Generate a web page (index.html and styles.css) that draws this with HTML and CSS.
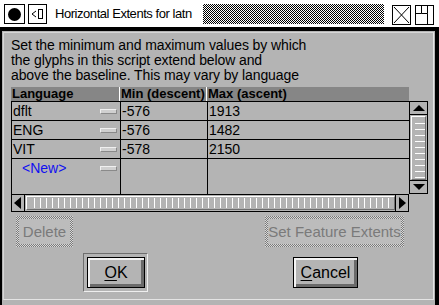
FILE: index.html
```html
<!DOCTYPE html>
<html>
<head>
<meta charset="utf-8">
<link rel="stylesheet" href="styles.css">
</head>
<body>
<div class="win">
  <div class="titlebar">
    <div class="tbox close"><span class="dot"></span></div>
    <div class="tbox menu"><svg width="14" height="14" viewBox="0 0 14 14"><path d="M5 4 L1 7 L5 10" fill="none" stroke="#000" stroke-width="1"/><rect x="7.5" y="2.5" width="4" height="9" fill="none" stroke="#000"/></svg></div>
    <div class="title">Horizontal Extents for latn</div>
    <div class="stipple"></div>
    <div class="tbox xbox"><svg width="17" height="18" viewBox="0 0 17 18"><path d="M1 1 L16 17 M16 1 L1 17" stroke="#000" stroke-width="1"/></svg></div>
    <div class="tbox maxbox"><svg width="17" height="18" viewBox="0 0 17 18"><path d="M5.5 0 V7.5 H0 M5.5 7.5 H11.5 M11.5 0 V7.5 M11.5 7.5 V18" fill="none" stroke="#000"/></svg></div>
  </div>
  <div class="frame">
    <div class="panel">
      <p class="intro">Set the minimum and maximum values by which<br>the glyphs in this script extend below and<br>above the baseline. This may vary by language</p>
      <div class="tablewrap">
        <div class="grid">
          <div class="head">
            <div class="hc c1">Language</div>
            <div class="hc c2">Min (descent)</div>
            <div class="hc c3">Max (ascent)</div>
          </div>
          <div class="body">
            <div class="rows">
              <div class="row"><div class="cell c1">dflt<span class="drop"></span></div><div class="cell c2">-576</div><div class="cell c3">1913</div></div>
              <div class="row"><div class="cell c1">ENG<span class="drop"></span></div><div class="cell c2">-576</div><div class="cell c3">1482</div></div>
              <div class="row"><div class="cell c1">VIT<span class="drop"></span></div><div class="cell c2">-578</div><div class="cell c3">2150</div></div>
              <div class="row last"><div class="cell c1"><span class="new">&lt;New&gt;</span><span class="drop"></span></div><div class="cell c2"></div><div class="cell c3"></div></div>
            </div>
            <div class="vscroll">
              <div class="arr up"></div>
              <div class="vthumb"></div>
              <div class="arr down"></div>
            </div>
          </div>
          <div class="hscroll">
            <div class="harr left"></div>
            <div class="hthumb"></div>
            <div class="harr right"></div>
          </div>
        </div>
      </div>
      <div class="btnrow1">
        <div class="btn dis del">Delete</div>
        <div class="btn dis sfe">Set Feature Extents</div>
      </div>
      <div class="btnrow2">
        <div class="deffr"><div class="btn ok"><u>O</u>K</div></div>
        <div class="btn cancel"><u>C</u>ancel</div>
      </div>
    </div>
  </div>
</div>
</body>
</html>
```

FILE: styles.css
```css
* { box-sizing: border-box; }
html, body { margin: 0; padding: 0; }
body {
  width: 439px; height: 305px; overflow: hidden;
  background: #000;
  font-family: "Liberation Sans", Arial, sans-serif;
  font-size: 14px;
  color: #000;
}
.win { width: 439px; height: 305px; display: flex; flex-direction: column; }
.titlebar {
  height: 31px; background: #fff; border-bottom: 4px solid #000;
  display: flex; align-items: flex-start; padding: 4px 0 0 4px;
}
.tbox { border: 1px solid #000; background: #fff; display: flex; align-items: center; justify-content: center; flex: none; }
.close { width: 21px; height: 20px; }
.dot { width: 13px; height: 13px; border-radius: 50%; background: #000; }
.menu { width: 19px; height: 20px; margin-left: 3px; }
.title { flex: none; width: 156px; padding-left: 8px; line-height: 20px; font-size: 13px; letter-spacing: -0.45px; white-space: nowrap; }
.stipple {
  flex: none; width: 181px; height: 20px;
  background: repeating-conic-gradient(#000 0 25%, #fff 0 50%) 0 0 / 2px 2px;
}
.xbox { width: 19px; height: 20px; margin-left: 8px; margin-top: 1px; }
.maxbox { width: 19px; height: 20px; margin-left: 4px; margin-top: 1px; }

.frame { flex: 1; background: #b4b4b4; margin: 0 4px 0 2px; padding: 1px 1px 1px 1px; }
.panel {
  height: 268px;
  border-top: 1px solid #d6d6d6; border-left: 1px solid #d6d6d6;
  border-right: 1px solid #e4e4e4; border-bottom: 1px solid #e4e4e4;
  padding: 5px 0 0 7px;
}
.intro { margin: 0; font-size: 14px; line-height: 15px; letter-spacing: -0.1px; color: #000; }
.tablewrap { margin-top: 4px; }
.grid { width: 417px; }
.head { display: flex; height: 14px; width: 398px; background: #868686; }
.hc { font-weight: bold; font-size: 13px; line-height: 14px; padding-left: 1px; white-space: nowrap; overflow: hidden; }
.head .c1 { width: 109px; border-right: 1px solid #fff; }
.head .c2 { width: 87px; border-right: 1px solid #fff; }
.head .c3 { flex: 1; }
.body { display: flex; }
.rows { width: 399px; height: 93px; border-left: 1px solid #000; border-top: 1px solid #000; }
.row { display: flex; height: 19px; border-bottom: 1px solid #000; }
.row.last { height: 35px; border-bottom: none; }
.cell { position: relative; line-height: 18px; font-size: 14px; padding-left: 1px; border-right: 1px solid #000; }
.cell.c1 { width: 109px; }
.cell.c2 { width: 87px; }
.cell.c3 { flex: 1; border-right: 1px solid #000; }
.new { color: #1010f0; margin-left: 9px; }
.drop {
  position: absolute; left: 88px; top: 7px; width: 17px; height: 5px;
  background: #d0d0d0; border: 1px solid #8a8a8a; border-top-color: #f0f0f0; border-left-color: #f0f0f0;
}
.vscroll {
  width: 18px; height: 93px; border: 1px solid #000; border-left: none;
  display: flex; flex-direction: column; background: #b4b4b4;
}
.arr { height: 13px; border-bottom: 1px solid #000; position: relative; }
.arr.down { border-bottom: none; border-top: 1px solid #000; margin-top: auto; }
.arr.up::after, .arr.down::after { content: ""; position: absolute; left: 3px; width: 0; height: 0; border-left: 6px solid transparent; border-right: 6px solid transparent; }
.arr.up::after { top: 3px; border-bottom: 6px solid #000; }
.arr.down::after { top: 3px; border-top: 6px solid #000; }
.vthumb {
  margin: 1px 1px 0 1px; height: 64px;
  border: 1px solid #fff; border-right-color: #707070; border-bottom-color: #707070;
  background: repeating-linear-gradient(to bottom, transparent 0 5px, #fff 5px 6px);
  background-size: 10px 60px; background-repeat: no-repeat; background-position: 3px 1px;
}
.hscroll {
  width: 398px; height: 18px; border: 1px solid #000; border-top: 1px solid #000;
  display: flex; align-items: stretch; background: #b4b4b4;
}
.harr { width: 13px; position: relative; }
.harr.left { border-right: 1px solid #000; }
.harr.right { margin-left: auto; border-left: 1px solid #000; }
.harr.left::after, .harr.right::after { content: ""; position: absolute; top: 2px; width: 0; height: 0; border-top: 6px solid transparent; border-bottom: 6px solid transparent; }
.harr.left::after { left: 2px; border-right: 7px solid #000; }
.harr.right::after { left: 3px; border-left: 7px solid #000; }
.hthumb {
  width: 369px; margin: 1px 0 0 1px; height: 14px;
  border: 1px solid #fff; border-right-color: #707070; border-bottom-color: #707070;
  background: repeating-linear-gradient(to right, transparent 0 5px, #fff 5px 6px);
  background-size: 360px 10px; background-repeat: no-repeat; background-position: 2px 1px;
}
.btnrow1 { display: flex; margin-top: 4px; padding-left: 5px; }
.btn { display: flex; align-items: center; justify-content: center; font-size: 15px; white-space: nowrap; }
.dis {
  height: 31px; color: #7a7a7a; position: relative;
  border: 3px solid transparent;
  background:
    linear-gradient(#bcbcbc, #bcbcbc) padding-box,
    repeating-conic-gradient(#7a7a7a 0 25%, #d8d8d8 0 50%) 0 0 / 2px 2px border-box;
}
.del { width: 57px; }
.sfe { width: 139px; margin-left: 192px; }
.btnrow2 { display: flex; margin-top: 6px; padding-left: 72px; align-items: flex-start; }
.deffr { width: 65px; height: 39px; border: 1px solid #6e6e6e; border-right-color: #eeeeee; border-bottom-color: #eeeeee; padding: 3px 2px 3px 3px; }
.ok, .cancel {
  height: 31px; border: 1px solid #000; background: #b4b4b4;
  box-shadow: inset 2px 2px 0 #f4f4f4, inset -3px -3px 0 #6a6a6a;
  font-size: 16px;
}
.ok { width: 58px; }
.cancel { width: 65px; margin-left: 145px; margin-top: 4px; }
u { text-decoration: underline; text-underline-offset: 2px; }
```
